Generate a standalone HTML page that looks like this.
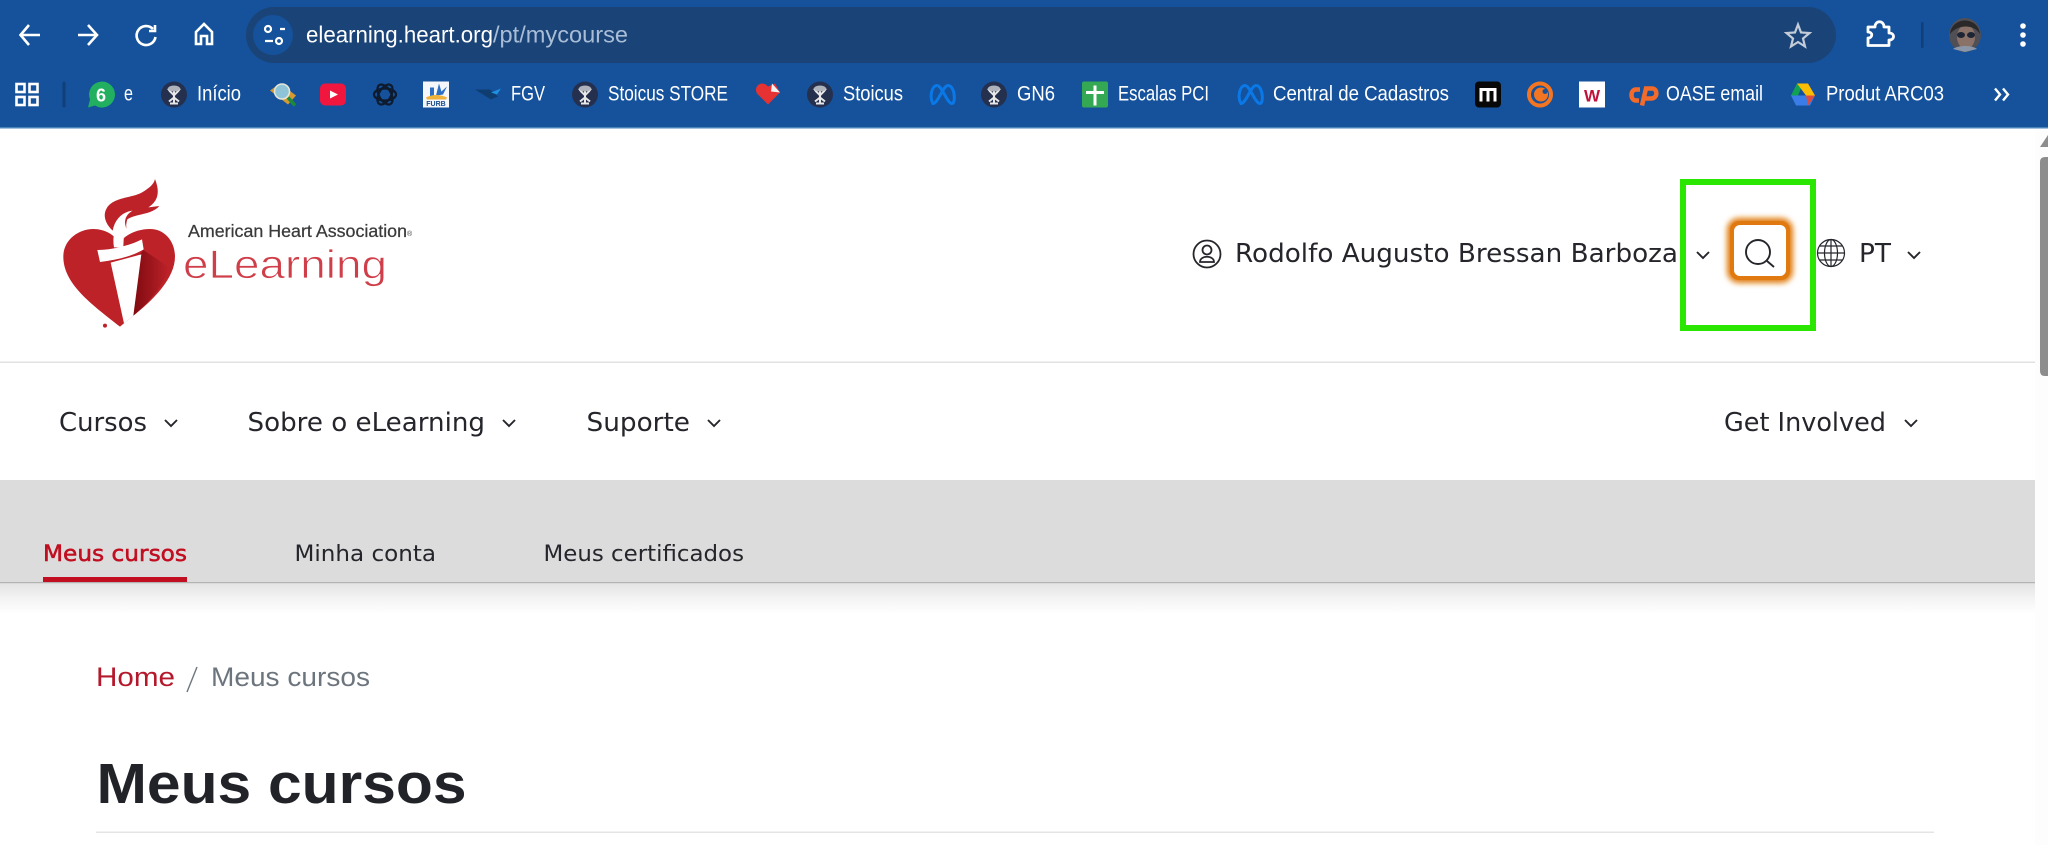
<!DOCTYPE html>
<html lang="pt"><head><meta charset="utf-8"><title>Meus cursos</title>
<style>
html,body{margin:0;padding:0;width:2048px;height:845px;overflow:hidden;background:#fff}
svg{display:block}
text{white-space:pre}
.b{font:21.5px "Liberation Sans",sans-serif;fill:#fff}
.m{font:25.5px "DejaVu Sans",sans-serif;fill:#24262b}
.s{font:22.5px "DejaVu Sans",sans-serif;fill:#24262b}
</style></head><body>
<svg width="2048" height="845" viewBox="0 0 2048 845" xmlns="http://www.w3.org/2000/svg">
<defs>
<linearGradient id="sh" x1="0" y1="0" x2="0" y2="1"><stop offset="0" stop-color="#e4e4e4"/><stop offset=".5" stop-color="#f4f4f4"/><stop offset="1" stop-color="#fff"/></linearGradient>
<linearGradient id="dk" x1="0" y1="0" x2="1" y2="0"><stop offset="0" stop-color="#7f0a10"/><stop offset="1" stop-color="#bd2229"/></linearGradient>
<filter id="gl" x="-30%" y="-30%" width="160%" height="160%"><feGaussianBlur stdDeviation="3"/></filter>
<g id="st"><circle r="13" fill="#25304f"/><path d="M0-8V9M-4 9H4M-6-6C-3-1-1-1 0 1M6-6C3-1 1-1 0 1M-5 7L0 3L5 7" stroke="#e8e8e8" stroke-width="2" fill="none"/><ellipse cy="-6" rx="6" ry="3" fill="#aeb2ba"/></g>
<g id="mt"><path d="M-9 9C-13 2-10-9-5-9C0-9 5 9 10 9C14 9 13-9 6-9C1-9-4 9-9 9Z" fill="none" stroke="#0a78e6" stroke-width="3"/></g>
<g id="ch"><path d="M-6-3L0 3L6-3" fill="none" stroke="#24262b" stroke-width="1.9"/></g>
</defs>

<!-- browser chrome -->
<rect width="2048" height="127" fill="#15529b"/>
<rect y="127" width="2048" height="1.500" fill="#4a82ba"/>
<rect x="246" y="7" width="1590" height="56" rx="28" fill="#1a4478"/>
<circle cx="273" cy="35" r="20" fill="#15529b"/>
<g fill="none" stroke="#fff" stroke-width="2.2">
<path d="M40 35H21M29 25L20.500 35L29 45" stroke-width="2.600"/>
<path d="M78 35H97M88 25L97 35L88 45" stroke-width="2.600"/>
<path d="M153 29A9.500 9.500 0 1 0 155.500 37" stroke-width="2.600"/><path d="M155 25V31H149" stroke-width="2.600"/>
<path d="M196 44V32L204 24L212 32V44H207V36H201V44Z" stroke-width="2.600"/>
<circle cx="268" cy="29" r="3"/><path d="M280 29H285M265 41H273"/><circle cx="279" cy="41" r="3"/>
</g>
<text x="306" y="42.500" font-family="Liberation Sans" font-size="23.500" fill="#fff" textLength="187" lengthAdjust="spacingAndGlyphs">elearning.heart.org</text>
<text x="493" y="42.500" font-family="Liberation Sans" font-size="23.500" fill="#a9bdd6" textLength="135" lengthAdjust="spacingAndGlyphs">/pt/mycourse</text>
<path d="M1798 24.500L1801 32.500L1809.500 33L1803 38.500L1805 46.500L1798 42L1791 46.500L1793 38.500L1786.500 33L1795 32.500Z" fill="none" stroke="#c3ccd8" stroke-width="2.200"/>
<path d="M1868 27H1875C1875 20 1884 20 1884 27H1889V33C1895 33 1895 40 1889 40V45.500H1868V38C1873 38 1873 32 1868 32Z" fill="none" stroke="#fff" stroke-width="2.800" stroke-linejoin="round"/>
<rect x="1921" y="22" width="2.500" height="26" rx="1" fill="#103f7a"/>
<ellipse cx="1965" cy="35" rx="16" ry="17" fill="#4f4f55"/><ellipse cx="1966" cy="37" rx="9" ry="12" fill="#8a7268"/><path d="M1950 34C1952 16 1978 16 1980 34C1974 24 1958 24 1950 34Z" fill="#2a2828"/><ellipse cx="1961" cy="35" rx="4" ry="3" fill="#1d2535"/><ellipse cx="1971" cy="35" rx="4" ry="3" fill="#1d2535"/><path d="M1953 49C1958 45 1972 45 1977 49L1965 52Z" fill="#8b97a8"/>
<circle cx="2023" cy="26" r="2.800" fill="#fff"/><circle cx="2023" cy="35" r="2.800" fill="#fff"/><circle cx="2023" cy="44" r="2.800" fill="#fff"/>

<!-- bookmarks -->
<g transform="translate(0 -1.500)">
<g fill="none" stroke="#fff" stroke-width="2.600"><rect x="16.500" y="85.500" width="8" height="8"/><rect x="29.500" y="85.500" width="8" height="8"/><rect x="16.500" y="98.500" width="8" height="8"/><rect x="29.500" y="98.500" width="8" height="8"/></g>
<rect x="62.500" y="83" width="3" height="26" rx="1.500" fill="#103f7a"/>
<path d="M88 109L90 101A13 13 0 1 1 95 107Z" fill="#22b060"/><text x="101" y="103" text-anchor="middle" font-family="Liberation Sans" font-weight="bold" font-size="18" fill="#fff">6</text>
<text class="b" x="124" y="102" textLength="9" lengthAdjust="spacingAndGlyphs">e</text>
<use href="#st" x="174" y="96"/>
<text class="b" x="197" y="102" textLength="44" lengthAdjust="spacingAndGlyphs">Início</text>
<path d="M270 92L280 85L296 97L288 106Z" fill="#d59a2f"/><circle cx="282" cy="93" r="7.500" fill="#8fc4d8" stroke="#e6e6d8" stroke-width="1.500"/><path d="M288 99L295 107" stroke="#1d8a3a" stroke-width="3.500"/>
<rect x="320" y="85" width="26" height="22" rx="5" fill="#f0163e"/><path d="M330 92L338 96L330 100Z" fill="#fff"/>
<g fill="none" stroke="#0e1a2d" stroke-width="2.200"><ellipse cx="385" cy="96" rx="11" ry="6" transform="rotate(60 385 96)"/><ellipse cx="385" cy="96" rx="11" ry="6" transform="rotate(-60 385 96)"/><ellipse cx="385" cy="96" rx="11" ry="6"/></g>
<rect x="423" y="83" width="26" height="26" fill="#f4f6fa"/><path d="M430 98V89H434V98ZM436 97L439 85L442 95ZM437 97L447 88L443 96Z" fill="#2a6fc4"/><path d="M426 99Q436 94 447 99L446 101H427Z" fill="#efb23a"/><text x="436" y="107.500" text-anchor="middle" font-family="Liberation Sans" font-weight="bold" font-size="7" fill="#174a8c">FURB</text>
<path d="M475 91H490L498 98L491 101Z" fill="#0f3d70"/><path d="M491 94L501 90L497 96Z" fill="#1e90e0"/>
<text class="b" x="511" y="102" textLength="34" lengthAdjust="spacingAndGlyphs">FGV</text>
<use href="#st" x="585" y="96"/>
<text class="b" x="608" y="102" textLength="120" lengthAdjust="spacingAndGlyphs">Stoicus STORE</text>
<path d="M768 106L757 95C754 90 758 85 762 85C765 85 767 87 768 88L775 85L780 94Z" fill="#e63232"/><path d="M772 85L780 94L771 93Z" fill="#f2f2f2"/>
<use href="#st" x="820" y="96"/>
<text class="b" x="843" y="102" textLength="60" lengthAdjust="spacingAndGlyphs">Stoicus</text>
<use href="#mt" x="942" y="96"/>
<use href="#st" x="994" y="96"/>
<text class="b" x="1017" y="102" textLength="38" lengthAdjust="spacingAndGlyphs">GN6</text>
<rect x="1082" y="83" width="26" height="26" rx="2" fill="#34a853"/><path d="M1095 87V107M1086 94H1104" stroke="#fff" stroke-width="3"/>
<text class="b" x="1118" y="102" textLength="91" lengthAdjust="spacingAndGlyphs">Escalas PCI</text>
<use href="#mt" x="1250" y="96"/>
<text class="b" x="1273" y="102" textLength="176" lengthAdjust="spacingAndGlyphs">Central de Cadastros</text>
<rect x="1475" y="83" width="26" height="26" rx="4" fill="#080808"/><path d="M1481 103V91H1495V103M1488 91V103" fill="none" stroke="#fff" stroke-width="3"/>
<circle cx="1540" cy="96" r="11" fill="none" stroke="#f47521" stroke-width="4"/><circle cx="1541" cy="96" r="7" fill="#f47521"/><circle cx="1545" cy="93" r="2.500" fill="#15529b"/>
<rect x="1579" y="83" width="26" height="26" fill="#fff"/><text x="1592" y="103" text-anchor="middle" font-family="Liberation Sans" font-weight="bold" font-size="17" fill="#c0123c">W</text>
<path d="M1640 91H1636C1630 91 1630 102 1636 102H1639M1642 107L1646 90H1652C1658 90 1658 100 1651 100H1645" fill="none" stroke="#f26b2b" stroke-width="4.500"/>
<text class="b" x="1666" y="102" textLength="97" lengthAdjust="spacingAndGlyphs">OASE email</text>
<path d="M1803 85L1797 85L1791 97L1798 97Z" fill="#12a150"/><path d="M1797 85H1808L1815 97H1806Z" fill="#fbbc04"/><path d="M1791 97L1796 107H1810L1815 97Z" fill="#3b7de8"/><path d="M1808 107L1815 97H1806Z" fill="#dd4b3e"/>
<text class="b" x="1826" y="102" textLength="118" lengthAdjust="spacingAndGlyphs">Produt ARC03</text>
<path d="M1995 90L2000 96L1995 102M2003 90L2008 96L2003 102" fill="none" stroke="#fff" stroke-width="2.400"/>
</g>

<!-- logo -->
<g transform="translate(40 160) scale(.3333)">
<path d="M240 500C150 430 70 370 70 290C70 240 115 207 160 207C195 207 225 225 238 250C255 222 295 207 330 207C375 207 405 245 405 290C405 355 340 420 280 467Z" fill="#bd2229"/>
<path d="M280 310L310 270L388 322C372 375 325 430 280 467Z" fill="url(#dk)"/>
<path d="M212 308L304 283L280 467L252 490Z" fill="#fff"/>
<path d="M172 270C215 270 265 258 306 238L311 268C270 292 225 300 180 306Z" fill="#fff"/>
<path d="M222 262C214 218 235 175 278 152C258 170 252 205 250 262Z" fill="#fff"/>
<path d="M345 57C362 100 352 125 325 142L358 138C335 165 290 160 262 178C258 190 258 200 260 207C250 185 255 165 278 152C250 155 225 175 218 212C195 190 188 165 200 145C220 110 280 115 310 95C330 82 342 72 345 57Z" fill="#bd2229"/>
<circle cx="195" cy="497" r="6" fill="#bd2229"/>
</g>
<text x="188" y="237" font-family="Liberation Sans" font-size="17.500" fill="#3a3a3a" stroke="#3a3a3a" stroke-width=".25" textLength="219" lengthAdjust="spacingAndGlyphs">American Heart Association</text>
<text x="407" y="236" font-family="Liberation Sans" font-size="7" fill="#3a3a3a">®</text>
<text x="183" y="278" font-family="Liberation Sans" font-size="40" fill="#cf3e49" stroke="#fff" stroke-width=".8" textLength="204" lengthAdjust="spacingAndGlyphs">eLearning</text>

<!-- header right -->
<circle cx="1207" cy="254" r="13.500" fill="none" stroke="#24262b" stroke-width="1.800"/><circle cx="1207" cy="250" r="4.500" fill="none" stroke="#24262b" stroke-width="1.800"/><path d="M1200 262C1200 255 1214 255 1214 262Z" fill="none" stroke="#24262b" stroke-width="1.800"/>
<text class="m" x="1235" y="262" textLength="443" lengthAdjust="spacingAndGlyphs">Rodolfo Augusto Bressan Barboza</text>
<use href="#ch" x="1703" y="255"/>
<rect x="1683" y="182" width="130" height="146" fill="none" stroke="#2be600" stroke-width="6"/>
<rect x="1727" y="218" width="66" height="65" rx="12" fill="#e07a10" filter="url(#gl)"/>
<rect x="1730" y="221" width="60" height="59" rx="9" fill="#e07a10"/>
<rect x="1734" y="225" width="52" height="51" rx="6" fill="#fff"/>
<circle cx="1758" cy="252" r="12" fill="none" stroke="#24262b" stroke-width="1.900"/><path d="M1767 261L1774 267" stroke="#24262b" stroke-width="1.900"/>
<g fill="none" stroke="#24262b" stroke-width="1.200"><circle cx="1831" cy="253" r="13.500"/><ellipse cx="1831" cy="253" rx="6.500" ry="13.500"/><path d="M1831 239.500V266.500M1817.500 253H1844.500M1819.500 246H1842.500M1819.500 260H1842.500"/></g>
<text class="m" x="1859" y="262" textLength="32" lengthAdjust="spacingAndGlyphs">PT</text>
<use href="#ch" x="1914" y="255"/>
<rect y="361.500" width="2035" height="1.500" fill="#e2e2e2"/>

<!-- main nav -->
<text class="m" x="59" y="431" textLength="88" lengthAdjust="spacingAndGlyphs">Cursos</text><use href="#ch" x="171" y="423"/>
<text class="m" x="247.500" y="431" textLength="237.500" lengthAdjust="spacingAndGlyphs">Sobre o eLearning</text><use href="#ch" x="509" y="423"/>
<text class="m" x="586.500" y="431" textLength="103.500" lengthAdjust="spacingAndGlyphs">Suporte</text><use href="#ch" x="714" y="423"/>
<text class="m" x="1724" y="431" textLength="162" lengthAdjust="spacingAndGlyphs">Get Involved</text><use href="#ch" x="1911" y="423"/>

<!-- sub nav -->
<rect y="480" width="2035" height="102" fill="#dcdcdc"/>
<rect y="582" width="2035" height="1.500" fill="#b3b3b3"/>
<rect y="584" width="2035" height="30" fill="url(#sh)"/>
<text class="s" x="43" y="561" style="fill:#c10e21;stroke:#c10e21;stroke-width:.55" textLength="144" lengthAdjust="spacingAndGlyphs">Meus cursos</text>
<rect x="43" y="577" width="144" height="5" fill="#c10e21"/>
<text class="s" x="294.500" y="561" textLength="141.500" lengthAdjust="spacingAndGlyphs">Minha conta</text>
<text class="s" x="543.500" y="561" textLength="200.500" lengthAdjust="spacingAndGlyphs">Meus certificados</text>

<!-- breadcrumb & title -->
<text x="96" y="686" font-family="Liberation Sans" font-size="27" fill="#b5182c" textLength="79" lengthAdjust="spacingAndGlyphs">Home</text>
<path d="M197 667L187 692" stroke="#6c757d" stroke-width="1.400"/>
<text x="211" y="686" font-family="Liberation Sans" font-size="27" fill="#6c757d" textLength="159" lengthAdjust="spacingAndGlyphs">Meus cursos</text>
<text x="96.500" y="803" font-family="Liberation Sans" font-weight="bold" font-size="57" fill="#222328" textLength="370" lengthAdjust="spacingAndGlyphs">Meus cursos</text>
<rect x="96" y="831.500" width="1838" height="1.500" fill="#e4e4e4"/>

<!-- scrollbar -->
<rect x="2035" y="129" width="13" height="716" fill="#fdfdfd"/>
<path d="M2040 147L2048 135V147Z" fill="#8d8d8d"/>
<path d="M2048 157H2045Q2040 157 2040 162V371Q2040 376 2045 376H2048Z" fill="#8d8d8d"/>
</svg>
</body></html>
